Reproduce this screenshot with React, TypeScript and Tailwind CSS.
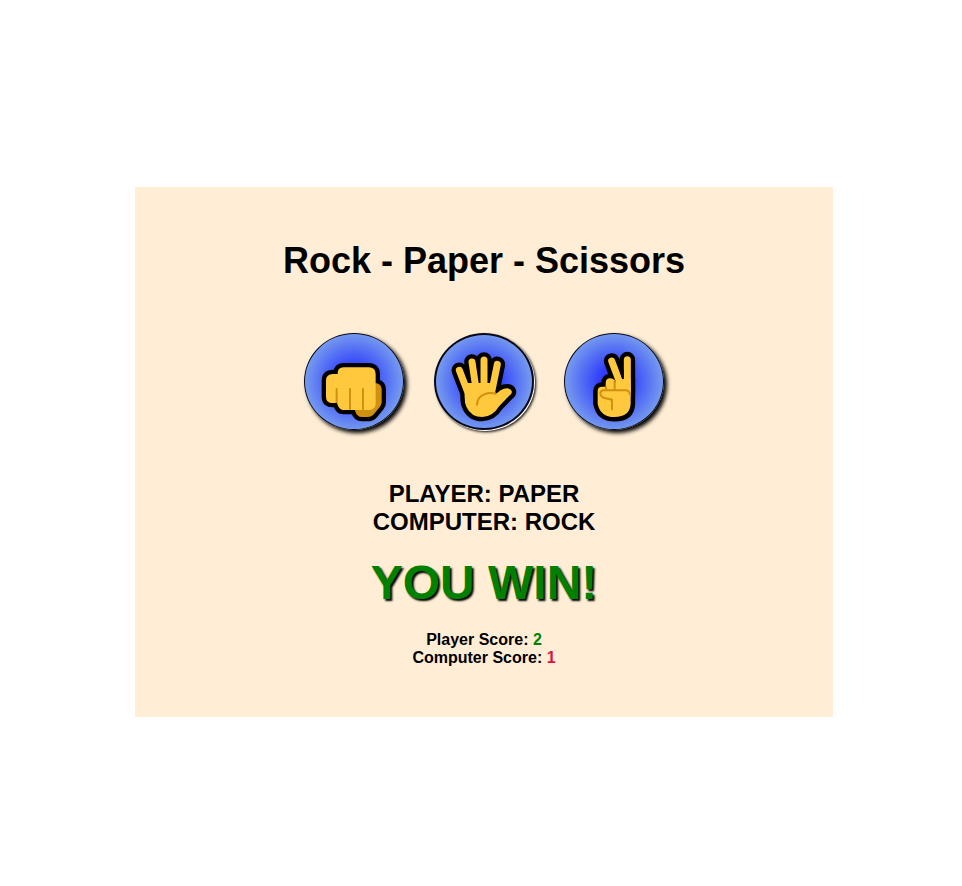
import type { ReactNode } from "react";

const GOLD = "#ffc83d";
const SHADE = "#d09010";

function Icon({ children }: { children: ReactNode }) {
  return (
    <svg viewBox="57 60 240 240" className="size-20 shrink-0 overflow-visible" aria-hidden="true" strokeLinecap="round" strokeLinejoin="round">
      {children}
    </svg>
  );
}

function Fist() {
  const thumb = "M230 184 H246 Q260 188 260 203 V241 Q260 248 255 254 L237 276 Q230 285 217 285 H201 Q186 285 180 266 Z";
  const hand = "M128 156 Q127 136 146 136 H221 Q242 136 242 157 V244 Q242 264 224 264 H144 Q132 264 126 243 H113 Q93 243 93 225 V176 Q93 156 114 156 Z";
  return (
    <Icon>
      <g fill="#000" stroke="#000" strokeWidth="26">
        <path d={thumb} />
        <path d={hand} />
      </g>
      <path d={thumb} fill={SHADE} />
      <path d={hand} fill={GOLD} />
      <path d="M125 199 V243 M165 199 V263 M204 199 V263" fill="none" stroke={SHADE} strokeWidth="6" strokeLinecap="butt" />
    </Icon>
  );
}

function Palm() {
  const fingers = "M103 145 L127 207 M141 120 L153 200 M177 114 V200 M217 127 L201 205";
  const palm = "M118 205 L128 183 H205 L212 216 Q227 203 237 200 Q257 196 261 209 Q261 216 251 223 L223 252 Q202 285 172 285 Q138 285 124 254 Q119 244 119 226 Z";
  return (
    <Icon>
      <path d={fingers} fill="none" stroke="#000" strokeWidth="47" />
      <path d={palm} fill="#000" stroke="#000" strokeWidth="26" />
      <path d={fingers} fill="none" stroke={GOLD} strokeWidth="21" />
      <path d={palm} fill={GOLD} />
      <path d="M212 215 Q194 210 178 217 Q157 225 156 248" fill="none" stroke={SHADE} strokeWidth="6" />
    </Icon>
  );
}

function Victory() {
  const fingers = "M170 117 L193 178 M217 113 V216";
  const palm = "M128 207 Q128 194 142 194 H152 V184 Q152 169 165 169 Q176 169 181 179 L205 171 H227 V244 Q226 285 178 285 Q136 285 128 245 Z";
  return (
    <Icon>
      <path d={fingers} fill="none" stroke="#000" strokeWidth="47" />
      <path d={palm} fill="#000" stroke="#000" strokeWidth="27" />
      <path d={fingers} fill="none" stroke={GOLD} strokeWidth="21" />
      <path d={palm} fill={GOLD} />
      <path d="M193 142 L200 167 L206 167 V142" fill="#000" />
      <path d="M179 178 V205 M153 196 V205 M225 218 Q223 205 211 205 H145 Q136 206 136 215 Q137 225 149 228 L171 233 V262" fill="none" stroke={SHADE} strokeWidth="6" />
    </Icon>
  );
}

const choices = [
  { name: "Rock", art: <Fist />, look: "border shadow-[3px_3px_4px_#000]" },
  { name: "Paper", art: <Palm />, look: "border-2 shadow-[1px_1px_0_#fff,2px_2px_3px_#000]" },
  { name: "Scissors", art: <Victory />, look: "border shadow-[3px_3px_4px_#000]" },
];

export default function App() {
  return (
    <div className="min-h-screen bg-white pt-[187px] pr-[129px] pb-8 pl-[135px] font-['Liberation_Sans',Arial,sans-serif] font-bold text-black">
      <main className="flex flex-col items-center bg-[#ffeed5] pt-[54px] pb-[50px]">
        <h1 className="text-4xl leading-10">Rock - Paper - Scissors</h1>
        <div className="mt-[52px] flex gap-[30px]">
          {choices.map((choice) => (
            <button
              key={choice.name}
              type="button"
              aria-label={choice.name}
              className={`flex h-[97px] w-[100px] cursor-pointer items-center justify-center rounded-[50%] border-[#080818] bg-[radial-gradient(circle,#2222ff_0%,#3545fa_25%,#7398ef_70%)] ${choice.look}`}
            >
              {choice.art}
            </button>
          ))}
        </div>
        <div className="mt-[50px] text-center text-2xl leading-7">
          <p>PLAYER: PAPER</p>
          <p>COMPUTER: ROCK</p>
        </div>
        <p className="mt-5 text-5xl leading-[54px] text-[#008000] [text-shadow:2px_2px_2px_#000]">YOU WIN!</p>
        <div className="mt-[21px] text-center text-base leading-[18px]">
          <p>Player Score: <span className="text-[#008000]">2</span></p>
          <p>Computer Score: <span className="text-[#dc143c]">1</span></p>
        </div>
      </main>
    </div>
  );
}
